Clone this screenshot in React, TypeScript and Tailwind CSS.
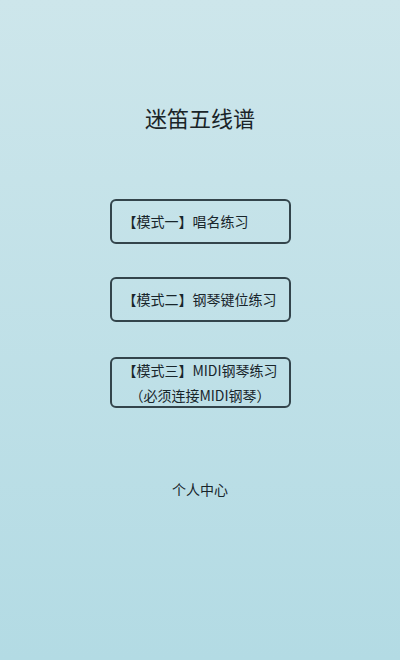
import React from "react";

const modes = [
  { id: 1, lines: ["【模式一】唱名练习"] },
  { id: 2, lines: ["【模式二】钢琴键位练习"] },
  { id: 3, lines: ["【模式三】MIDI钢琴练习", "（必须连接MIDI钢琴）"] },
];

function ModeButton({ lines }: { lines: string[] }) {
  const tall = lines.length > 1;
  return (
    <button
      type="button"
      className={`w-[181px] ${tall ? "h-[51px] items-center" : "h-[45px] items-start pl-[11px]"} flex flex-col justify-center rounded-[6px] border-2 border-[#33444b] text-[14px] leading-[25px] text-[#18252b]`}
    >
      {lines.map((l) => (
        <span key={l} className="whitespace-nowrap">
          {l}
        </span>
      ))}
    </button>
  );
}

export default function App() {
  return (
    <div
      className="min-h-[660px] w-full flex flex-col items-center bg-gradient-to-b from-[#cde6eb] to-[#b3dbe4]"
      style={{ fontFamily: '"Noto Sans CJK SC", "Noto Sans", sans-serif' }}
    >
      <h1 className="mt-[102px] text-[22px] leading-[30px] text-[#1a2428]">迷笛五线谱</h1>
      <div className="mt-[67px] flex flex-col items-center gap-[33px]">
        {modes.map((m, i) => (
          <div key={m.id} className={i === 2 ? "mt-[2px]" : ""}>
            <ModeButton lines={m.lines} />
          </div>
        ))}
      </div>
      <div className="mt-[70px] text-[14px] leading-[22px] text-[#18252b]">个人中心</div>
    </div>
  );
}
